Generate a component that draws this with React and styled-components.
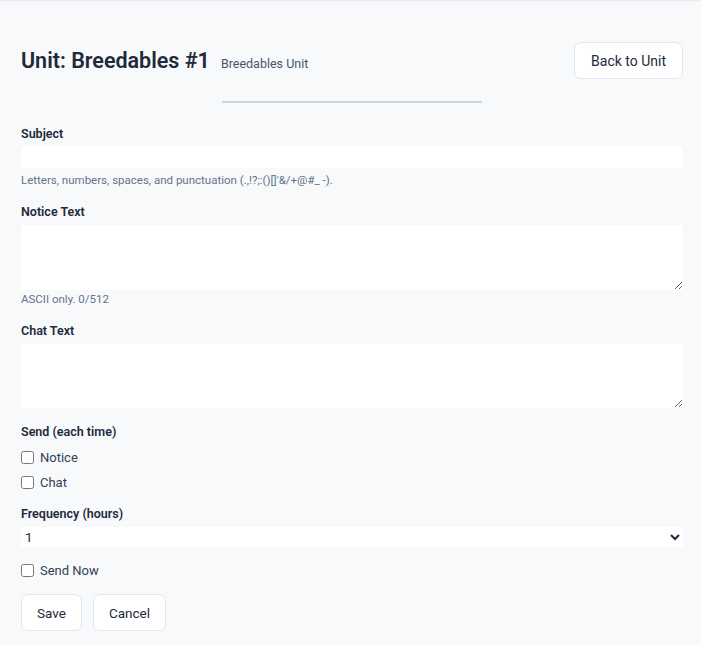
import React from 'react'
import styled, { createGlobalStyle } from 'styled-components'

const GlobalStyle = createGlobalStyle`
    html, body {
        margin: 0;
        padding: 0;
        background: #f8f9fb;
    }
    body {
        font-family: Roboto, "Noto Sans", sans-serif;
        color: #1e293b;
    }
    * {
        box-sizing: border-box;
    }
`

const App = () => {
    return (
        <Page>
            <GlobalStyle />
            <Header>
                <TitleGroup>
                    <Title>Unit: Breedables #1</Title>
                    <Subtitle>Breedables Unit</Subtitle>
                </TitleGroup>
                <Button type="button" $pad={16} $size={14}>Back to Unit</Button>
            </Header>

            <Divider />

            <form onSubmit={e => e.preventDefault()}>
                <Field>
                    <Label htmlFor="subject" $gap={2}>Subject</Label>
                    <TextInput id="subject" type="text" />
                    <Hint $top={4}>Letters, numbers, spaces, and punctuation (.,!?;:()[]'&amp;/+@#_ -).</Hint>
                </Field>

                <Field>
                    <Label htmlFor="notice">Notice Text</Label>
                    <TextArea id="notice" rows={3} />
                    <Hint $top={1}>ASCII only. 0/512</Hint>
                </Field>

                <Field>
                    <Label htmlFor="chat">Chat Text</Label>
                    <TextArea id="chat" rows={3} $height={64} />
                </Field>

                <Field $bottom={12}>
                    <Label as="div" $gap={5}>Send (each time)</Label>
                    <CheckList>
                        <CheckRow>
                            <Check type="checkbox" />
                            Notice
                        </CheckRow>
                        <CheckRow>
                            <Check type="checkbox" />
                            Chat
                        </CheckRow>
                    </CheckList>
                </Field>

                <Field $bottom={13}>
                    <Label htmlFor="freq">Frequency (hours)</Label>
                    <Select id="freq" defaultValue="1">
                        <option value="1">1</option>
                        <option value="2">2</option>
                        <option value="4">4</option>
                        <option value="8">8</option>
                        <option value="12">12</option>
                        <option value="24">24</option>
                    </Select>
                </Field>

                <Field>
                    <CheckRow>
                        <Check type="checkbox" />
                        Send Now
                    </CheckRow>
                </Field>

                <Actions>
                    <Button type="submit">Save</Button>
                    <Button type="button">Cancel</Button>
                </Actions>
            </form>
        </Page>
    )
}

export default App


// ================================= styling =================================

const Page = styled.div`
    min-height: 645px;
    padding: 42px 18px 20px 21px;
    box-shadow: inset 0 2px 1px -1px #e6e8ec;
`

const Header = styled.div`
    display: flex;
    align-items: center;
    justify-content: space-between;
`

const TitleGroup = styled.div`
    display: flex;
    align-items: baseline;
    gap: 11px;
`

const Title = styled.h1`
    margin: 0;
    font-size: 21.5px;
    font-weight: 600;
    color: #1e293b;
`

const Subtitle = styled.span`
    font-size: 12.5px;
    color: #475569;
`

// thin rule under the header
const Divider = styled.div`
    width: 260px;
    height: 2px;
    margin: 22px auto 21px;
    background: #cbd5e1;
`

const Field = styled.div`
    margin-bottom: ${p => p.$bottom ?? 14}px;
`

const Label = styled.label`
    display: block;
    font-size: 12.5px;
    font-weight: 600;
    line-height: 20px;
    margin-bottom: ${p => p.$gap ?? 3}px;
`

const TextInput = styled.input`
    display: block;
    width: 100%;
    height: 22px;
    border: none;
    background: #fff;
    font: inherit;
    font-size: 13px;
    padding: 0 4px;
`

const TextArea = styled.textarea`
    display: block;
    width: 100%;
    height: ${p => p.$height ?? 65}px;
    border: none;
    background: #fff;
    font: inherit;
    font-size: 13px;
    padding: 4px;
`

const Hint = styled.div`
    margin-top: ${p => p.$top}px;
    font-size: 11.5px;
    line-height: 16px;
    color: #64748b;
`

const CheckList = styled.div`
    display: flex;
    flex-direction: column;
    gap: 5px;
`

const CheckRow = styled.label`
    display: flex;
    align-items: center;
    height: 20px;
    font-size: 13px;
    color: #334155;
`

const Check = styled.input`
    width: 13px;
    height: 13px;
    margin: 0 6px 0 0;
`

const Select = styled.select`
    display: block;
    width: 100%;
    height: 20px;
    border: none;
    background: #fff;
    font: inherit;
    font-size: 13.5px;
    color: #1e293b;
    padding: 0;
`

const Actions = styled.div`
    display: flex;
    gap: 11px;
`

const Button = styled.button`
    height: 37px;
    padding: 0 ${p => p.$pad ?? 15}px;
    border: 1px solid #e2e8f0;
    border-radius: 7px;
    background: #fff;
    font-family: inherit;
    font-size: ${p => p.$size ?? 13.5}px;
    color: #1e293b;
    cursor: pointer;
`
